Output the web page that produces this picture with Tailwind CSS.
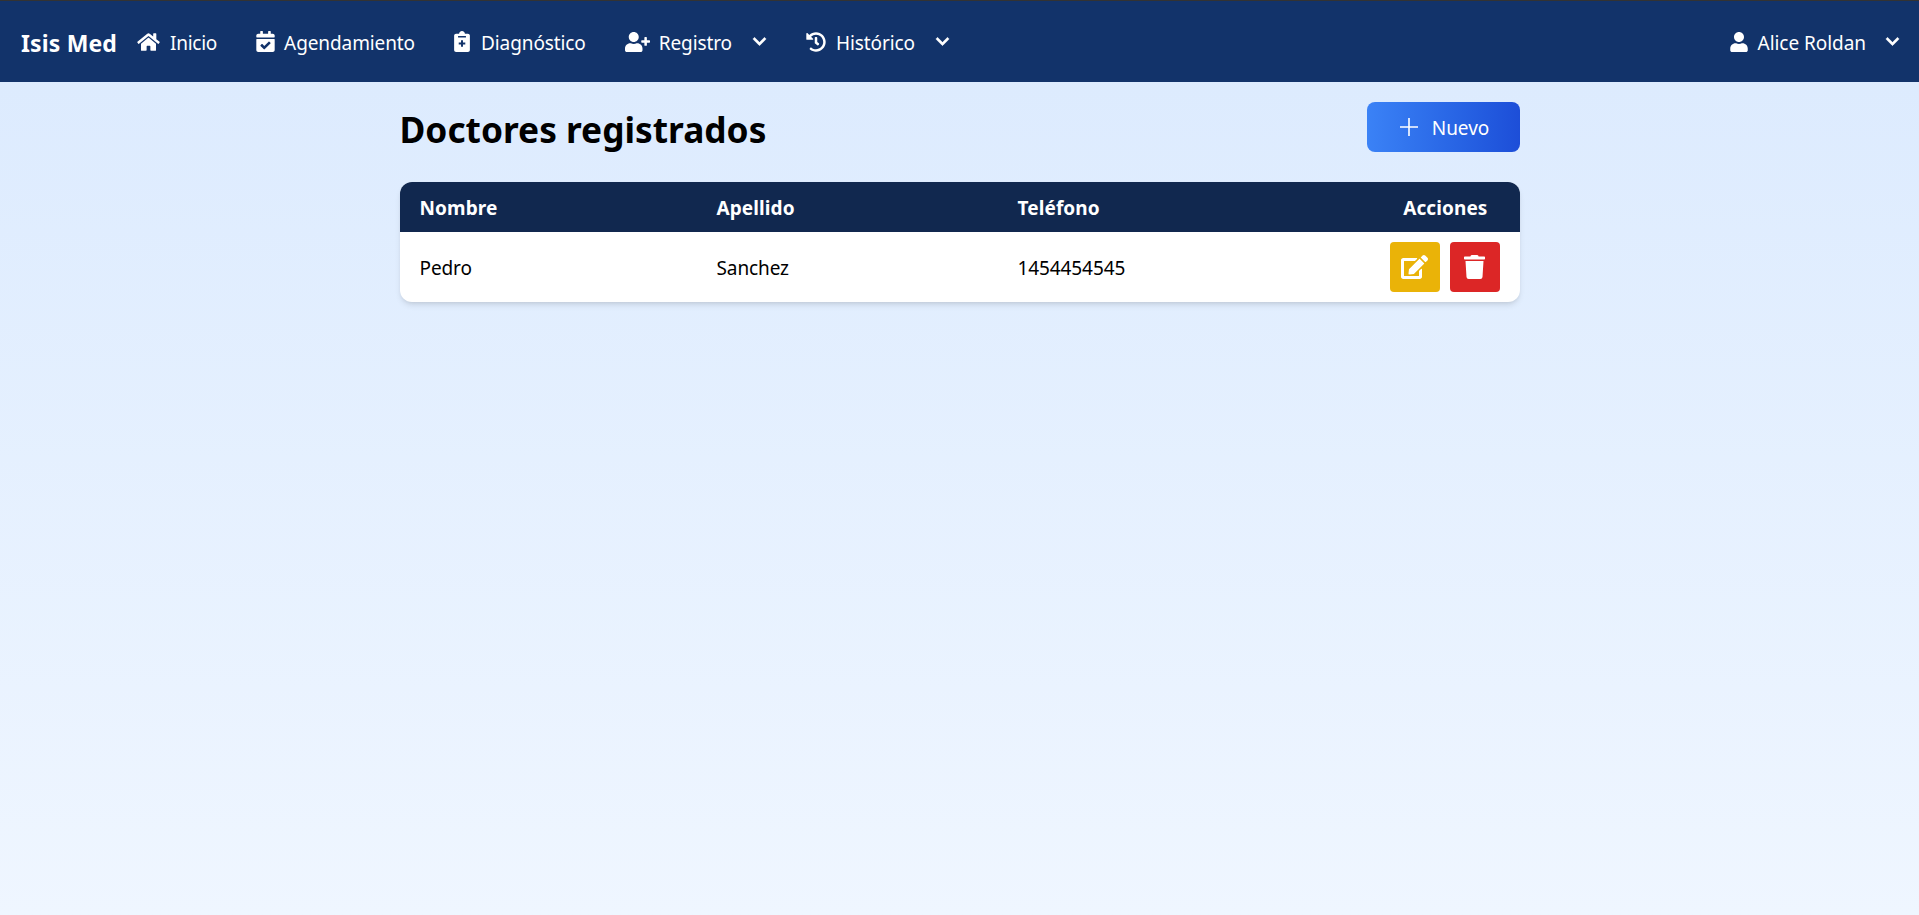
<!DOCTYPE html>
<html lang="es">
<head>
<meta charset="utf-8">
<title>Isis Med</title>
<script src="https://cdn.jsdelivr.net/npm/@tailwindcss/browser@4"></script>
</head>
<body class="m-0 h-[915px] overflow-hidden bg-linear-to-b from-[#dbeafe] to-[#eff6ff] font-['Noto_Sans',sans-serif] text-black">
<nav class="flex h-[82px] items-center justify-between border-t border-[#333333] bg-[#12336a] pl-[21px] pr-[19px] text-white">
  <div class="flex items-center">
    <a class="w-[116px] pt-[2px] text-[23px] leading-8 font-bold tracking-[0.15px]">Isis Med</a>
    <ul class="flex items-center gap-[39px] text-[19px] tracking-[-0.1px]">
      <li class="flex items-center gap-[10px]">
        <svg class="h-5 w-[23px] fill-white" viewBox="0 0 576 512"><path d="M280.37 148.26L96 300.11V464a16 16 0 0 0 16 16l112.06-.29a16 16 0 0 0 15.92-16V368a16 16 0 0 1 16-16h64a16 16 0 0 1 16 16v95.64a16 16 0 0 0 16 16.05L464 480a16 16 0 0 0 16-16V300L295.67 148.26a12.19 12.19 0 0 0-15.3 0zM571.6 251.47L488 182.56V44.05a12 12 0 0 0-12-12h-56a12 12 0 0 0-12 12v72.61L318.47 43a48 48 0 0 0-61 0L4.34 251.47a12 12 0 0 0-1.6 16.9l25.5 31A12 12 0 0 0 45.15 301l235.22-193.74a12.19 12.19 0 0 1 15.3 0L530.9 301a12 12 0 0 0 16.9-1.6l25.5-31a12 12 0 0 0-1.7-16.93z"/></svg>
        <span class="pt-[3px] tracking-[-0.25px]">Inicio</span>
      </li>
      <li class="flex items-center gap-[9px]">
        <svg class="h-[21px] w-[19px] fill-white" viewBox="0 0 448 512"><path d="M436 160H12c-6.627 0-12-5.373-12-12v-36c0-26.51 21.49-48 48-48h48V12c0-6.627 5.373-12 12-12h40c6.627 0 12 5.373 12 12v52h128V12c0-6.627 5.373-12 12-12h40c6.627 0 12 5.373 12 12v52h48c26.51 0 48 21.49 48 48v36c0 6.627-5.373 12-12 12zM12 192h424c6.627 0 12 5.373 12 12v260c0 26.51-21.49 48-48 48H48c-26.51 0-48-21.49-48-48V204c0-6.627 5.373-12 12-12zm333.296 95.947l-28.169-28.398c-4.667-4.705-12.265-4.736-16.97-.068L194.12 364.665l-45.98-46.352c-4.667-4.705-12.266-4.736-16.971-.068l-28.397 28.17c-4.705 4.667-4.736 12.265-.068 16.97l82.601 83.269c4.667 4.705 12.265 4.736 16.97.068l142.953-141.805c4.705-4.667 4.736-12.265.068-16.97z"/></svg>
        <span class="pt-[3px]">Agendamiento</span>
      </li>
      <li class="flex items-center gap-[11px]">
        <svg class="h-[21px] w-4 fill-white" viewBox="0 0 384 512"><path fill-rule="evenodd" d="M336 64h-72c-8-36-38-64-72-64s-64 28-72 64H48C21.500 64 0 85.500 0 112v352c0 26.500 21.500 48 48 48h288c26.500 0 48-21.500 48-48V112c0-26.500-21.500-48-48-48zM96 124h192v32H96zM168 224h48v56h56v48h-56v56h-48v-56h-56v-48h56z"/></svg>
        <span class="pt-[3px]">Diagnóstico</span>
      </li>
      <li class="flex items-center gap-[9px]">
        <svg class="h-5 w-[25px] fill-white" viewBox="0 0 640 512"><path d="M624 208h-64v-64c0-8.800-7.200-16-16-16h-32c-8.800 0-16 7.200-16 16v64h-64c-8.800 0-16 7.200-16 16v32c0 8.800 7.200 16 16 16h64v64c0 8.800 7.200 16 16 16h32c8.800 0 16-7.200 16-16v-64h64c8.800 0 16-7.200 16-16v-32c0-8.800-7.200-16-16-16zm-400 48c70.700 0 128-57.300 128-128S294.700 0 224 0 96 57.300 96 128s57.300 128 128 128zm89.600 32h-16.700c-22.200 10.200-46.900 16-72.900 16s-50.600-5.800-72.900-16h-16.700C60.200 288 0 348.200 0 422.400V464c0 26.500 21.500 48 48 48h352c26.500 0 48-21.500 48-48v-41.600c0-74.200-60.200-134.400-134.400-134.400z"/></svg>
        <span class="pt-[3px]">Registro</span>
        <svg class="ml-[11px] h-[15px] w-[15px] fill-white stroke-white stroke-[16]" viewBox="0 0 448 512"><path d="M207.029 381.476L12.686 187.132c-9.373-9.373-9.373-24.569 0-33.941l22.667-22.667c9.357-9.357 24.522-9.375 33.901-.04L224 284.505l154.745-154.021c9.379-9.335 24.544-9.317 33.901.04l22.667 22.667c9.373 9.373 9.373 24.569 0 33.941L240.971 381.476c-9.373 9.372-24.569 9.372-33.942 0z"/></svg>
      </li>
      <li class="flex items-center gap-[10px]">
        <svg class="h-5 w-5 fill-white" viewBox="0 0 512 512"><path d="M504 255.531c.253 136.64-111.18 248.372-247.82 248.468-59.015.042-113.223-20.53-155.822-54.911-11.077-8.94-11.905-25.541-1.839-35.607l11.267-11.267c8.609-8.609 22.353-9.551 31.891-1.984C173.062 425.135 212.781 440 256 440c101.705 0 184-82.311 184-184 0-101.705-82.311-184-184-184-48.814 0-93.149 18.969-126.068 49.932l50.754 50.754c10.08 10.08 2.941 27.314-11.313 27.314H24c-8.837 0-16-7.163-16-16V38.627c0-14.254 17.234-21.393 27.314-11.314l49.372 49.372C129.209 34.136 189.552 8 256 8c136.81 0 247.747 110.78 248 247.531zm-180.912 78.784l9.823-12.63c8.138-10.463 6.253-25.542-4.21-33.679L288 256.349V152c0-13.255-10.745-24-24-24h-16c-13.255 0-24 10.745-24 24v135.651l65.409 50.874c10.463 8.137 25.541 6.253 33.679-4.21z"/></svg>
        <span class="pt-[3px]">Histórico</span>
        <svg class="ml-[10px] h-[15px] w-[15px] fill-white stroke-white stroke-[16]" viewBox="0 0 448 512"><path d="M207.029 381.476L12.686 187.132c-9.373-9.373-9.373-24.569 0-33.941l22.667-22.667c9.357-9.357 24.522-9.375 33.901-.04L224 284.505l154.745-154.021c9.379-9.335 24.544-9.317 33.901.04l22.667 22.667c9.373 9.373 9.373 24.569 0 33.941L240.971 381.476c-9.373 9.372-24.569 9.372-33.942 0z"/></svg>
      </li>
    </ul>
  </div>
  <div class="flex items-center gap-[10px] text-[19px] tracking-[-0.05px]">
    <svg class="h-5 w-[18px] fill-white" viewBox="0 0 448 512"><path d="M224 256c70.700 0 128-57.300 128-128S294.700 0 224 0 96 57.300 96 128s57.300 128 128 128zm89.600 32h-16.700c-22.200 10.200-46.900 16-72.900 16s-50.600-5.800-72.900-16h-16.700C60.200 288 0 348.200 0 422.400V464c0 26.500 21.500 48 48 48h352c26.500 0 48-21.500 48-48v-41.600c0-74.200-60.200-134.400-134.400-134.400z"/></svg>
    <span class="pt-[3px]">Alice Roldan</span>
    <svg class="ml-[9px] h-[15px] w-[15px] fill-white stroke-white stroke-[16]" viewBox="0 0 448 512"><path d="M207.029 381.476L12.686 187.132c-9.373-9.373-9.373-24.569 0-33.941l22.667-22.667c9.357-9.357 24.522-9.375 33.901-.04L224 284.505l154.745-154.021c9.379-9.335 24.544-9.317 33.901.04l22.667 22.667c9.373 9.373 9.373 24.569 0 33.941L240.971 381.476c-9.373 9.372-24.569 9.372-33.942 0z"/></svg>
  </div>
</nav>
<main class="mx-auto w-[1120px] pt-5">
  <div class="flex h-[50px] items-center justify-between">
    <h1 class="pt-1 text-[35.3px] leading-[50px] font-bold">Doctores registrados</h1>
    <button class="flex h-[50px] w-[153px] items-center justify-center gap-[13px] rounded-lg bg-linear-to-r from-[#3b82f6] to-[#1d4ed8] pl-[2px] text-[19px] tracking-[-0.05px] text-white">
      <svg class="h-5 w-5 stroke-white" viewBox="0 0 20 20" fill="none" stroke-width="1.6"><path d="M10 1v18M1 10h18"/></svg>
      <span class="pt-[2px]">Nuevo</span>
    </button>
  </div>
  <div class="mt-[30px] overflow-hidden rounded-xl bg-white shadow-md">
    <div class="grid h-[50px] grid-cols-[297px_301px_1fr_auto] items-center bg-[#11284f] pl-[20px] pr-[32px] pt-[2px] text-[19px] font-bold tracking-[0.1px] text-white">
      <span>Nombre</span>
      <span>Apellido</span>
      <span>Teléfono</span>
      <span>Acciones</span>
    </div>
    <div class="grid h-[70px] grid-cols-[297px_301px_1fr_auto] items-center pl-[20px] pr-5 text-[19px] tracking-[-0.1px]">
      <span class="pt-[2px]">Pedro</span>
      <span class="pt-[2px]">Sanchez</span>
      <span class="pt-[2px]">1454454545</span>
      <div class="flex gap-[10px]">
        <button class="flex h-[50px] w-[50px] items-center justify-center rounded bg-[#eab308]">
          <svg class="h-6 w-[27px] fill-white" viewBox="0 0 576 512"><path d="M402.6 83.2l90.2 90.2c3.800 3.800 3.800 10 0 13.800L274.400 405.600l-92.800 10.300c-12.400 1.400-22.900-9.100-21.500-21.500l10.300-92.800L388.800 83.200c3.800-3.800 10-3.800 13.800 0zm162-22.900l-48.800-48.800c-15.200-15.200-39.900-15.200-55.200 0l-35.400 35.400c-3.800 3.800-3.800 10 0 13.800l90.200 90.200c3.800 3.800 10 3.800 13.800 0l35.400-35.400c15.200-15.300 15.200-40 0-55.200zM384 346.200V448H64V128h229.800c3.200 0 6.200-1.300 8.500-3.500l40-40c7.600-7.600 2.200-20.500-8.500-20.500H48C21.500 64 0 85.500 0 112v352c0 26.500 21.500 48 48 48h352c26.500 0 48-21.500 48-48V306.200c0-10.700-12.900-16-20.500-8.500l-40 40c-2.200 2.300-3.500 5.300-3.500 8.500z"/></svg>
        </button>
        <button class="flex h-[50px] w-[50px] items-center justify-center rounded bg-[#dc2626]">
          <svg class="h-6 w-[21px] fill-white" viewBox="0 0 448 512"><path d="M432 32H312l-9.400-18.700A24 24 0 0 0 281.100 0H166.800a23.720 23.720 0 0 0-21.400 13.300L136 32H16A16 16 0 0 0 0 48v32a16 16 0 0 0 16 16h416a16 16 0 0 0 16-16V48a16 16 0 0 0-16-16zM53.200 467a48 48 0 0 0 47.900 45h245.800a48 48 0 0 0 47.900-45L416 128H32z"/></svg>
        </button>
      </div>
    </div>
  </div>
</main>
</body>
</html>
